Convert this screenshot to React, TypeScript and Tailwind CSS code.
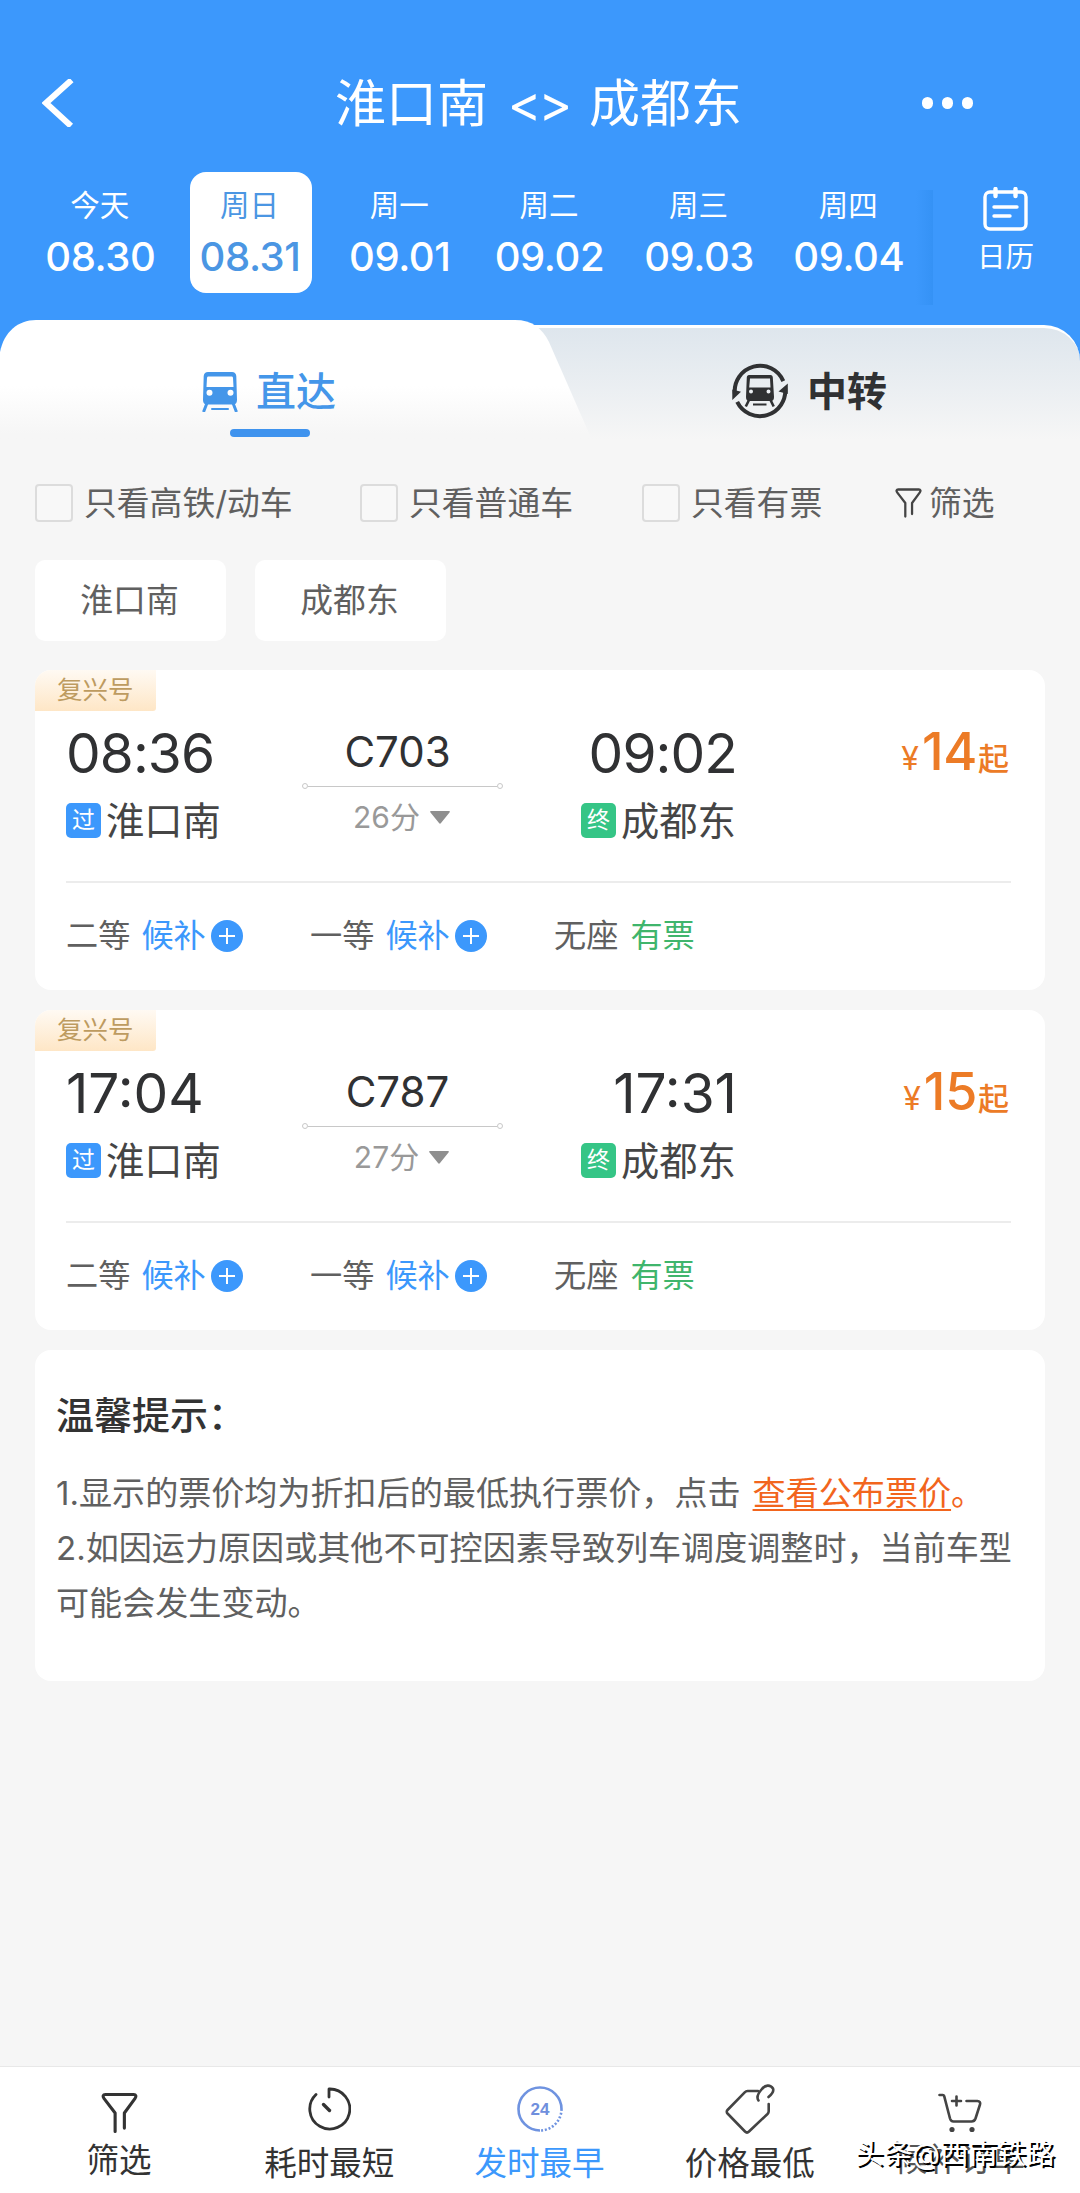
import React from 'react';

interface DateItem {
  week: string;
  date: string;
}

interface Train {
  no: string;
  depart: string;
  arrive: string;
  duration: string;
  price: number;
}

const DATES: DateItem[] = [
  { week: '今天', date: '08.30' },
  { week: '周日', date: '08.31' },
  { week: '周一', date: '09.01' },
  { week: '周二', date: '09.02' },
  { week: '周三', date: '09.03' },
  { week: '周四', date: '09.04' },
];

const SELECTED_DATE = '08.31';

const TRAINS: Train[] = [
  { no: 'C703', depart: '08:36', arrive: '09:02', duration: '26分', price: 14 },
  { no: 'C787', depart: '17:04', arrive: '17:31', duration: '27分', price: 15 },
];

// ─── Icons ───────────────────────────────────────────────────────────────────
const TrainIcon = ({ className }: { className: string }) => (
  <svg className={className} viewBox="0 0 36 40" fill="none">
    <path
      fillRule="evenodd"
      clipRule="evenodd"
      fill="currentColor"
      d="M6 0h24c2.500 0 4 1.600 4.300 4L35 28c0 3-1.500 4.500-4 4.500H5c-2.500 0-4-1.500-4-4.500L1.700 4C2 1.600 3.500 0 6 0ZM6.500 4.500c-1 0-1.500.7-1.500 1.500L4.500 15h27L31 6c0-.8-.5-1.500-1.500-1.500h-23ZM7.500 17.800a3 3 0 1 0 0 6 3 3 0 0 0 0-6Zm21 0a3 3 0 1 0 0 6 3 3 0 0 0 0-6Z"
    />
    <path d="M5 31 1.500 40M31 31l3.500 9" stroke="currentColor" strokeWidth="3" />
    <path d="M10 37h16" stroke="currentColor" strokeWidth="2" strokeLinecap="round" />
  </svg>
);

const TransferIcon = () => (
  <svg className="w-14 h-14" viewBox="0 0 56 56" fill="none">
    <path d="M2.900 31A25.300 25.300 0 0 1 51.300 18.100" stroke="#303133" strokeWidth="4" />
    <path d="M5.200 38.900A25.300 25.300 0 0 0 53.100 25" stroke="#303133" strokeWidth="4" />
    <path d="M.3 26.500V37l8.700-8.200ZM55.800 20.500V31l-9.300-2.500Z" fill="#303133" />
    <path
      fillRule="evenodd"
      clipRule="evenodd"
      fill="#303133"
      d="M17 12h21.500c1.500 0 2.200 1 2.300 2.300L42 34c0 2.500-1 4-3 4H17c-2 0-3-1.500-3-4l.8-19.700C14.900 13 15.600 12 17 12Zm1 3.500-.8 9h21.300L38 15.500H18Zm1 10.900a2 2 0 1 0 0 4 2 2 0 0 0 0-4Zm17.500 0a2 2 0 1 0 0 4 2 2 0 0 0 0-4Z"
    />
    <path d="m17 37-3.200 6.500M38.500 37l3.200 6.500" stroke="#303133" strokeWidth="2.600" />
    <path d="M21 41.500h13.500" stroke="#303133" strokeWidth="2" />
  </svg>
);

const CalendarIcon = () => (
  <svg className="w-[45px] h-11" viewBox="0 0 45 44" fill="none" stroke="white" strokeWidth="3.400" strokeLinecap="round">
    <rect x="2" y="5" width="41" height="37" rx="5" />
    <path d="M12.500 2v7M32.500 2v7" strokeWidth="4.400" />
    <path d="M11 20h23M11 29h16" />
  </svg>
);

const FunnelIcon = ({ className }: { className: string }) => (
  <svg className={className} viewBox="0 0 38 42" fill="none" stroke="currentColor" strokeWidth="3.200" strokeLinecap="round" strokeLinejoin="round">
    <path d="M14.500 40V21L3 6C1.500 4 2 2 4.500 2h29C36 2 36.500 4 35 6L24 21v15.500" />
  </svg>
);

const ClockIcon = () => (
  <svg className="w-11 h-11" viewBox="0 0 44 44" fill="none" stroke="#333" strokeWidth="2.800" strokeLinecap="round" strokeLinejoin="round">
    <path d="M9 7.500A20 20 0 1 0 22 2v8" />
    <path d="m16.500 17.500 6 6" strokeWidth="3.400" />
  </svg>
);

const Clock24Icon = () => (
  <svg className="w-[46px] h-[46px]" viewBox="0 0 46 46" fill="none" stroke="#6f93e0" strokeWidth="2.600">
    <path d="M23 44.500A21.500 21.500 0 1 1 44.500 23" />
    <path d="M44.500 23A21.500 21.500 0 0 1 23 44.500" strokeDasharray="2 1.800" />
    <text x="23" y="29" textAnchor="middle" fontSize="17" fontWeight="700" fontFamily="Liberation Sans, sans-serif" fill="#6f8fdd" stroke="none">
      24
    </text>
  </svg>
);

const TagIcon = () => (
  <svg className="w-[50px] h-[50px]" viewBox="0 0 50 50" fill="none" stroke="#444" strokeWidth="2.600" strokeLinecap="round" strokeLinejoin="round">
    <path d="M33 7H22.500c-1 0-2 .5-2.800 1.300L2.500 26c-1 1-1 2.500 0 3.500l17.500 18c1.200 1.200 2.800 1.200 4 0L42.500 30c.8-.8 1.200-1.800 1.200-2.800V20" />
    <path d="M33.500 16.500C31 13 33 9.500 36.500 5.500 40 .5 45.500.5 48 4.500c1.200 3-1.500 6-4.500 8.500" />
  </svg>
);

const CartIcon = () => (
  <svg className="w-11 h-10" viewBox="0 0 44 40" fill="none" stroke="#444" strokeWidth="2.600" strokeLinecap="round" strokeLinejoin="round">
    <path d="M1.500 2h3.200c.8 0 1.300.5 1.500 1.200L12 25.500c.6 2 1.500 3 3.500 3h18c2 0 3.200-.8 4-3L42 11.500c.7-2-.5-3.500-2.500-3.500h-11" />
    <path d="M18.500 3.500v9M14 8h9" />
    <circle cx="14" cy="36.500" r="2.600" fill="#444" stroke="none" />
    <circle cx="34" cy="36.500" r="2.600" fill="#444" stroke="none" />
  </svg>
);

const PlusBadge = () => (
  <svg className="w-8 h-8 ml-[5px]" viewBox="0 0 32 32" fill="none">
    <circle cx="16" cy="16" r="16" fill="#3c98fc" />
    <path d="M8 16h16M16 8v16" stroke="white" strokeWidth="2" />
  </svg>
);

// ─── Sections ────────────────────────────────────────────────────────────────
const Header = () => (
  <header className="bg-[#3c98fc] h-80 text-white">
    <div className="h-[172px] pt-[68px] flex">
      <div className="w-[335px] pl-[42px] pt-[11px]">
        <svg className="w-8 h-12" viewBox="0 0 32 48" fill="none">
          <path d="M29.500 1 4 24l25 23" stroke="white" strokeWidth="6" />
        </svg>
      </div>
      <h1 className="flex w-[407px] justify-between text-[51px] leading-[72px]">
        <span>淮口南</span>
        <span className="tracking-[-3px]">&lt;&gt;</span>
        <span>成都东</span>
      </h1>
      <div className="flex-1 pl-[180px] pt-[29px] flex gap-[9px]">
        <i className="w-[11px] h-[12px] rounded-full bg-white" />
        <i className="w-[11px] h-[12px] rounded-full bg-white" />
        <i className="w-[11px] h-[12px] rounded-full bg-white" />
      </div>
    </div>

    <div className="flex">
      <div className="flex w-[933px] pl-[26px]">
        {DATES.map(d => (
          <div key={d.date} className="w-[149.700px] flex justify-center">
            <div
              className={
                d.date === SELECTED_DATE
                  ? 'w-[122px] h-[121px] rounded-2xl bg-white text-[#4b96e3] flex flex-col items-center'
                  : 'w-[122px] h-[121px] flex flex-col items-center'
              }
            >
              <span className="text-[29.500px] leading-[40px] mt-[13px] pr-[2px]">{d.week}</span>
              <span className="text-[40px] leading-[48px] mt-[8px] pr-px font-medium tracking-[-0.400px]">{d.date}</span>
            </div>
          </div>
        ))}
      </div>
      <div className="w-[17px] h-[115px] mt-[18px] -ml-[17px] bg-gradient-to-r from-[#3c98fc] to-[#3592f5]" />
      <div className="flex-1 flex flex-col items-center pt-[15px] pr-[2px]">
        <CalendarIcon />
        <span className="text-[28.500px] leading-[40px] mt-[6px]">日历</span>
      </div>
    </div>
  </header>
);

const Tabs = () => (
  <nav className="flex h-[120px] bg-[#3c98fc]">
    <div className="relative z-10 w-[600px] h-[120px] bg-gradient-to-b from-white from-55% to-[#f6f6f6] to-95% [clip-path:path('M0_120V32C4_12_18_0_36_0H515C532_0_542_8_549_22L592_120Z')]">
      <div className="flex items-center pl-[202px] pt-[48px] text-[#4496e9]">
        <TrainIcon className="w-9 h-10" />
        <span className="ml-[18px] text-[40px] leading-[48px] font-medium">直达</span>
      </div>
      <div className="w-20 h-2 ml-[230px] mt-[13px] rounded-full bg-[#3f93ee]" />
    </div>
    <div className="flex-1 -ml-[80px] mt-[5px] border-t-3 border-white rounded-tr-[36px] bg-gradient-to-b from-[#dee6ed] to-[#f6f6f6]">
      <div className="flex items-center pl-[212px] pt-[34px] text-[#303133]">
        <TransferIcon />
        <span className="ml-[19px] pt-[2px] text-[40px] leading-[56px] font-bold">中转</span>
      </div>
    </div>
  </nav>
);

const CheckItem = ({ label, className }: { label: string; className: string }) => (
  <label className={className}>
    <i className="w-[38px] h-[38px] rounded-[4px] border-2 border-[#dcdcdc] bg-[#f8f8f8]" />
    <span className="ml-[11px]">{label}</span>
  </label>
);

const Filters = () => (
  <section className="pl-[35px] text-[32.800px] text-[#606060]">
    <div className="flex items-center h-[60px] mt-[33px] leading-[60px] whitespace-nowrap">
      <CheckItem label="只看高铁/动车" className="flex items-center w-[325px]" />
      <CheckItem label="只看普通车" className="flex items-center w-[282px]" />
      <CheckItem label="只看有票" className="flex items-center w-[253px]" />
      <FunnelIcon className="w-[27px] h-[30px] text-[#444]" />
      <span className="ml-[7px]">筛选</span>
    </div>
    <div className="flex gap-[29px] mt-[27px]">
      {['淮口南', '成都东'].map(name => (
        <button key={name} className="w-[191px] h-[81px] rounded-[10px] bg-white pr-[2px] pt-px">
          {name}
        </button>
      ))}
    </div>
  </section>
);

const Time = ({ value }: { value: string }) => (
  <span
    className={
      // "1" is a narrow digit, so those times are set a bit looser
      value.includes('1')
        ? 'text-[55px] leading-[56px] tracking-normal text-[#303133]'
        : 'text-[55px] leading-[56px] tracking-[-0.900px] text-[#303133]'
    }
  >
    {value}
  </span>
);

const Station = ({ badge, name, color }: { badge: string; name: string; color: 'blue' | 'green' }) => (
  <div className="flex items-center mt-[16px] h-[46px]">
    <span
      className={
        color === 'blue'
          ? 'w-[35px] h-[35px] rounded-[5px] bg-[#3c98fc] text-white text-[23px] leading-[35px] text-center'
          : 'w-[35px] h-[35px] rounded-[5px] bg-[#35c586] text-white text-[23px] leading-[35px] text-center'
      }
    >
      {badge}
    </span>
    <span className="ml-[5px] pt-px text-[38.300px] leading-[46px] text-[#454545]">{name}</span>
  </div>
);

const TrainCard = ({ train }: { train: Train }) => (
  <article className="h-80 bg-white rounded-[16px] overflow-hidden">
    <div className="w-[121px] h-[41px] pl-[22px] rounded-br-[3px] bg-gradient-to-b from-[#fffaf3] to-[#fee6c6] text-[25.500px] leading-[40px] text-[#bd9b60]">
      复兴号
    </div>

    <div className="flex h-[172px] ml-[31px] mr-[34px] border-b-2 border-[#ececec]">
      <div className="w-[236px] pt-[14px]">
        <div className="flex">
          <Time value={train.depart} />
        </div>
        <Station badge="过" name="淮口南" color="blue" />
      </div>

      <div className="w-[201px] flex flex-col items-center">
        <div className="text-[42px] leading-[50px] mt-[16px] pr-[10px] text-[#303133]">{train.no}</div>
        <div className="w-full flex items-center mt-[6px]">
          <i className="w-[6px] h-[6px] rounded-full border border-[#c8c8c8]" />
          <i className="flex-1 h-px bg-[#c8c8c8]" />
          <i className="w-[6px] h-[6px] rounded-full border border-[#c8c8c8]" />
        </div>
        <div className="flex items-center mt-[7px] pr-[2px] text-[30px] leading-[42px] text-[#999]">
          {train.duration}
          <svg className="w-5 h-[13px] ml-[10px]" viewBox="0 0 20 13">
            <path d="M1 0h18q1.500 0 .5 1.500L11 12q-1 1.500-2 0L.5 1.500Q-.5 0 1 0Z" fill="#8f8f8f" />
          </svg>
        </div>
      </div>

      <div className="flex-1 pl-[78px] pt-[14px]">
        <div className="w-[156px] flex justify-end">
          <Time value={train.arrive} />
        </div>
        <Station badge="终" name="成都东" color="green" />
      </div>

      <div className="flex items-baseline h-[60px] mt-[11px] pr-[2px] font-medium text-[#ec7b26] leading-[60px]">
        <span className="text-[32px] font-normal">¥</span>
        <span className="text-[52px] ml-[3px] tracking-[-0.300px]">{train.price}</span>
        <span className="text-[31px] ml-px">起</span>
      </div>
    </div>

    <div className="flex items-center h-[107px] pl-[31px] text-[32.200px] text-[#606060]">
      <div className="flex items-center w-[244px]">
        二等<span className="ml-[11px] text-[#3c98fc]">候补</span>
        <PlusBadge />
      </div>
      <div className="flex items-center w-[244px]">
        一等<span className="ml-[11px] text-[#3c98fc]">候补</span>
        <PlusBadge />
      </div>
      <div>
        无座<span className="ml-[12px] text-[#3fb56c]">有票</span>
      </div>
    </div>
  </article>
);

const Tips = () => (
  <article className="h-[331px] bg-white rounded-[16px] pl-[21px] pt-[41px]">
    <h2 className="text-[38px] leading-[48px] font-medium text-[#333]">温馨提示：</h2>
    <div className="mt-[27px] text-[33.100px] leading-[55px] text-[#606060] whitespace-nowrap">
      <p>
        1.显示的票价均为折扣后的最低执行票价，点击
        <span className="text-[#f2651d] ml-[12px]">
          <span className="underline decoration-2 underline-offset-4">查看公布票价</span>。
        </span>
      </p>
      <p>2.如因运力原因或其他不可控因素导致列车调度调整时，当前车型</p>
      <p>可能会发生变动。</p>
    </div>
  </article>
);

const BottomBar = () => (
  <footer className="relative h-[127px] bg-white border-t border-[#e8e8e8] flex pl-[13px] pr-[15px] text-[32.500px] leading-[40px] text-[#333]">
    <div className="flex-1 flex flex-col items-center pt-[25px] pl-px">
      <FunnelIcon className="w-[37px] h-[42px]" />
      <span className="mt-[7px]">筛选</span>
    </div>
    <div className="flex-1 flex flex-col items-center pt-[20px]">
      <ClockIcon />
      <span className="mt-[13px]">耗时最短</span>
    </div>
    <div className="flex-1 flex flex-col items-center pt-[19px] text-[#3c98fc]">
      <Clock24Icon />
      <span className="mt-[12px]">发时最早</span>
    </div>
    <div className="flex-1 flex flex-col items-center pt-[17px]">
      <TagIcon />
      <span className="mt-[10px]">价格最低</span>
    </div>
    <div className="flex-1 flex flex-col items-center pt-[26px]">
      <CartIcon />
      <span className="mt-[7px] text-[#555]">候补订单</span>
    </div>
    {/* Account signature over the last tab */}
    <div className="absolute left-[855px] top-[67px] text-[28.700px] leading-[40px] whitespace-nowrap text-white [text-shadow:2px_2px_0_#000]">
      头条@西南铁路
    </div>
  </footer>
);

export default function App() {
  return (
    <div className="w-[1080px] h-[2193px] flex flex-col bg-[#f6f6f6] overflow-hidden font-[Inter,'Noto_Sans_CJK_SC',sans-serif]">
      <Header />
      <Tabs />
      <Filters />
      <main className="flex-1 px-[35px] pt-[29px] flex flex-col gap-5">
        {TRAINS.map(train => (
          <TrainCard key={train.no} train={train} />
        ))}
        <Tips />
      </main>
      <BottomBar />
    </div>
  );
}
